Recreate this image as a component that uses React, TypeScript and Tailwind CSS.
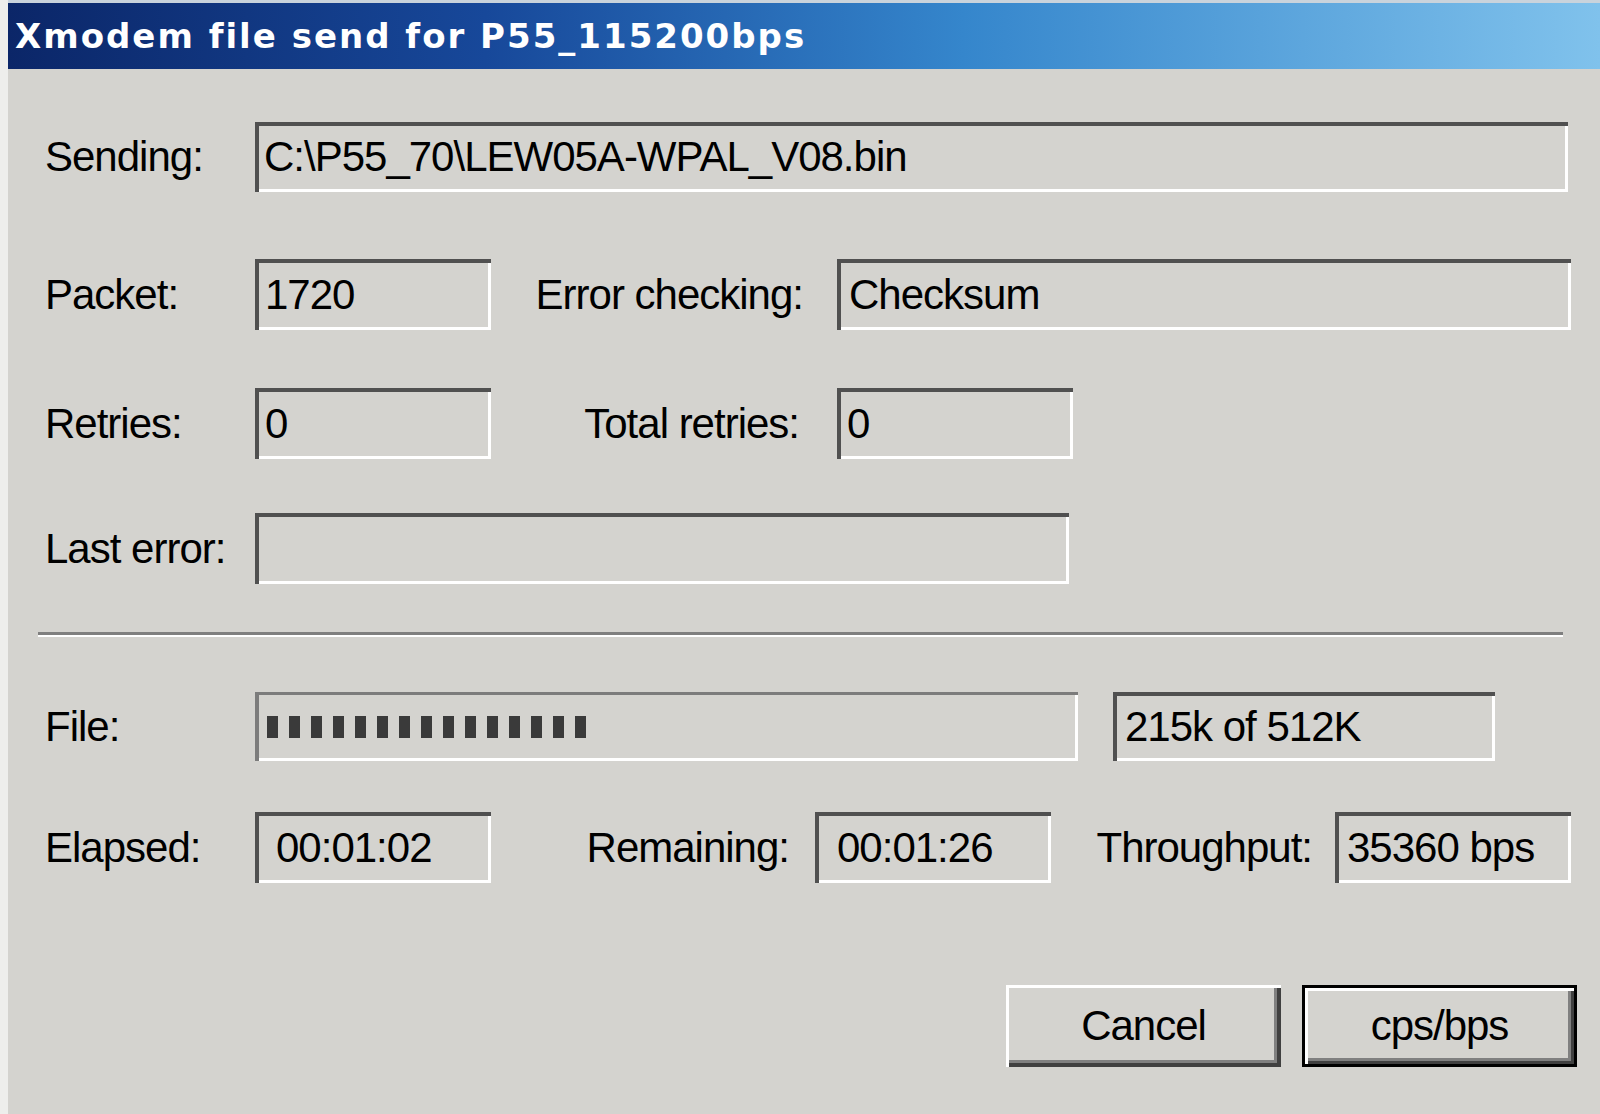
import React from "react";

const sunken = "flex items-center bg-[#d4d3cf] shadow-[inset_4px_4px_0_#505050,inset_-3px_-3px_0_#ffffff]";

function Field({ className = "", children, pad = "pl-[12px]" }: { className?: string; children?: React.ReactNode; pad?: string }) {
  return <div className={`${sunken} ${pad} ${className}`}>{children}</div>;
}

export default function App() {
  const blocks = Array.from({ length: 15 });

  return (
    <div className="w-[1600px] h-[1114px] overflow-hidden bg-[#d4d3cf] border-l-[8px] border-[#eeeeec] text-black font-['Liberation_Sans',Arial,sans-serif] text-[42px] tracking-[-1px] leading-none">
      {/* Title bar */}
      <div className="h-[3px] bg-[#c9d3dc]" />
      <div className="h-[66px] flex items-center pl-[7px] bg-[linear-gradient(to_right,#0b2668_0%,#17489a_30%,#3586cc_60%,#80c2ec_100%)]">
        <span className="font-['DejaVu_Sans',sans-serif] font-bold text-[34px] tracking-[2px] text-white">
          Xmodem file send for P55_115200bps
        </span>
      </div>

      {/* Sending */}
      <div className="mt-[53px] h-[70px] flex items-center pl-[37px]">
        <div className="w-[210px]">Sending:</div>
        <Field className="w-[1313px] h-full" pad="pl-[9px]">C:\P55_70\LEW05A-WPAL_V08.bin</Field>
      </div>

      {/* Packet / Error checking */}
      <div className="mt-[67px] h-[71px] flex items-center pl-[37px]">
        <div className="w-[210px]">Packet:</div>
        <Field className="w-[236px] h-full" pad="pl-[10px]">1720</Field>
        <div className="w-[346px] flex justify-end pr-[34px]">Error checking:</div>
        <Field className="w-[734px] h-full" pad="pl-[12px]">Checksum</Field>
      </div>

      {/* Retries */}
      <div className="mt-[58px] h-[71px] flex items-center pl-[37px]">
        <div className="w-[210px]">Retries:</div>
        <Field className="w-[236px] h-full" pad="pl-[10px]">0</Field>
        <div className="w-[346px] flex justify-end pr-[38px]">Total retries:</div>
        <Field className="w-[236px] h-full" pad="pl-[10px]">0</Field>
      </div>

      {/* Last error */}
      <div className="mt-[54px] h-[71px] flex items-center pl-[37px]">
        <div className="w-[210px]">Last error:</div>
        <Field className="w-[814px] h-full" />
      </div>

      {/* Separator */}
      <div className="mt-[48px] ml-[30px] w-[1525px]">
        <div className="h-[3px] bg-[#7f7f7f]" />
        <div className="h-[2px] bg-white" />
      </div>

      {/* File progress */}
      <div className="mt-[55px] h-[69px] flex items-center pl-[37px]">
        <div className="w-[210px]">File:</div>
        <div className="w-[823px] h-full flex items-center gap-[11px] pl-[12px] bg-[#d4d3cf] shadow-[inset_4px_3px_0_#7c7c7c,inset_-3px_-3px_0_#ffffff]">
          {blocks.map((_, i) => (
            <div key={i} className="w-[11px] h-[22px] bg-[#3a3a3a]" />
          ))}
        </div>
        <Field className="ml-[35px] w-[382px] h-full" pad="pl-[12px]">215k of 512K</Field>
      </div>

      {/* Times */}
      <div className="mt-[51px] h-[71px] flex items-center pl-[37px]">
        <div className="w-[210px]">Elapsed:</div>
        <Field className="w-[236px] h-full" pad="pl-[21px]">00:01:02</Field>
        <div className="w-[324px] flex justify-end pr-[26px]">Remaining:</div>
        <Field className="w-[236px] h-full" pad="pl-[22px]">00:01:26</Field>
        <div className="w-[284px] flex justify-end pr-[23px]">Throughput:</div>
        <Field className="w-[236px] h-full" pad="pl-[12px]">35360 bps</Field>
      </div>

      {/* Buttons */}
      <div className="mt-[102px] flex justify-end gap-[21px] pr-[23px]">
        <button className="w-[275px] h-[82px] flex items-center justify-center bg-[#d4d3cf] shadow-[inset_3px_3px_0_#ffffff,inset_-4px_-4px_0_#404040,inset_-7px_-7px_0_#808080]">
          Cancel
        </button>
        <button className="w-[275px] h-[82px] flex items-center justify-center bg-[#d4d3cf] shadow-[inset_0_0_0_3px_#000000,inset_6px_6px_0_#ffffff,inset_-6px_-6px_0_#404040,inset_-9px_-9px_0_#808080]">
          cps/bps
        </button>
      </div>
    </div>
  );
}
